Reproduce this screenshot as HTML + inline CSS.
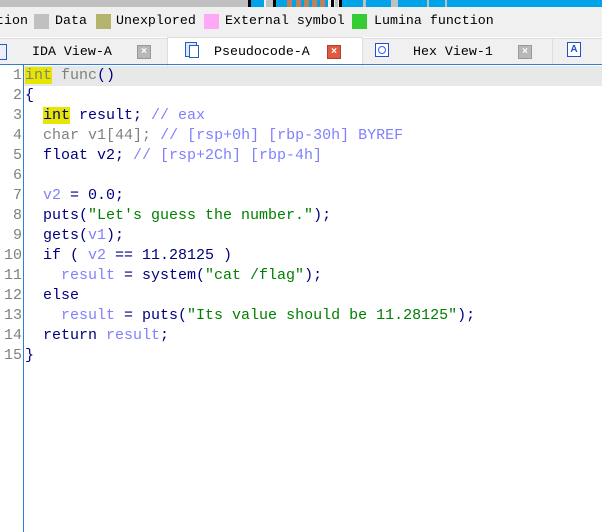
<!DOCTYPE html>
<html><head><meta charset="utf-8"><style>
body{margin:0;width:602px;height:532px;background:#fff;position:relative;overflow:hidden;font-family:"Liberation Mono",monospace}
.a{position:absolute}
.top{top:0;left:0;width:602px;height:37px;background:#f0f0f0}
.seg{position:absolute;top:0;height:7px}
.lg{font-size:13.3px;top:13px;color:#000}
.box{top:14px;width:15px;height:15px}
.tab{font-size:13.3px;top:44px;color:#000}
.cl{width:12px;height:12px;top:45px;background:#b8b8b8;border:1px solid #999;color:#fff;font:bold 10px/12px "Liberation Sans",sans-serif;text-align:center}
.code{top:66px;left:0;font-size:15px;line-height:20px;white-space:pre}
.ln{position:absolute;left:0;width:22px;text-align:right;color:#808080}
.tx{position:absolute;left:25px;color:#000080}
.g{color:#808080}.c{color:#8080ff}.v{color:#8080ff}.s{color:#008000}.y{background:#e6e600}
</style></head><body>
<div class="a top"></div>
<div class="seg" style="left:0;width:248px;background:#c0c0c0"></div>
<div class="seg" style="left:248px;width:3px;background:#000"></div>
<div class="seg" style="left:251px;width:13px;background:#00a2e8"></div>
<div class="seg" style="left:266px;width:7px;background:#c0c0c0"></div>
<div class="seg" style="left:273px;width:3px;background:#000"></div>
<div class="seg" style="left:276px;width:52px;background:#00a2e8"></div>
<div class="seg" style="left:287px;width:5px;background:#c0805a"></div>
<div class="seg" style="left:296px;width:5px;background:#c0805a"></div>
<div class="seg" style="left:304px;width:5px;background:#c0805a"></div>
<div class="seg" style="left:312px;width:5px;background:#c0805a"></div>
<div class="seg" style="left:320px;width:5px;background:#c0805a"></div>
<div class="seg" style="left:331px;width:3px;background:#000"></div>
<div class="seg" style="left:335px;width:3px;background:#c0c0c0"></div>
<div class="seg" style="left:339px;width:3px;background:#000"></div>
<div class="seg" style="left:342px;width:21px;background:#00a2e8"></div>
<div class="seg" style="left:363px;width:3px;background:#c0c0c0"></div>
<div class="seg" style="left:366px;width:25px;background:#00a2e8"></div>
<div class="seg" style="left:391px;width:7px;background:#c0c0c0"></div>
<div class="seg" style="left:398px;width:29px;background:#00a2e8"></div>
<div class="seg" style="left:427px;width:2px;background:#c0c0c0"></div>
<div class="seg" style="left:429px;width:16px;background:#00a2e8"></div>
<div class="seg" style="left:445px;width:2px;background:#c0c0c0"></div>
<div class="seg" style="left:447px;width:155px;background:#00a2e8"></div>

<div class="a lg" style="left:-4px">tion</div>
<div class="a box" style="left:34px;background:#c0c0c0"></div>
<div class="a lg" style="left:55px">Data</div>
<div class="a box" style="left:96px;background:#b4b46c"></div>
<div class="a lg" style="left:116px">Unexplored</div>
<div class="a box" style="left:204px;background:#ffa8f8"></div>
<div class="a lg" style="left:225px">External symbol</div>
<div class="a box" style="left:352px;background:#33cc33"></div>
<div class="a lg" style="left:374px">Lumina function</div>

<div class="a" style="left:0;top:38px;width:602px;height:26px;background:#f0f0f0;border-top:1px solid #ddd"></div>
<div class="a" style="left:167px;top:37px;width:194px;height:28px;background:#fff;border:1px solid #ddd;border-bottom:none"></div>
<div class="a" style="left:552px;top:39px;width:1px;height:25px;background:#ddd"></div>
<div class="a" style="left:0;top:44px;width:6px;height:14px;border:1px solid #2060c0;border-left:none;background:#eef"></div>
<div class="a tab" style="left:32px">IDA View-A</div>
<div class="a cl" style="left:137px">×</div>
<div class="a" style="left:185px;top:42px;width:10px;height:13px;border:1px solid #2060c0;background:#dde8ff"></div>
<div class="a" style="left:189px;top:45px;width:8px;height:11px;border:1px solid #2060c0;background:#fff"></div>
<div class="a tab" style="left:214px">Pseudocode-A</div>
<div class="a cl" style="left:327px;background:#e05a40;border-color:#b04030">×</div>
<div class="a" style="left:375px;top:43px;width:12px;height:12px;border:1px solid #2050d0;background:#fff"></div>
<div class="a" style="left:378px;top:46px;width:6px;height:6px;border:1px solid #3060ff;border-radius:50%"></div>
<div class="a tab" style="left:413px">Hex View-1</div>
<div class="a cl" style="left:518px">×</div>
<div class="a" style="left:567px;top:42px;width:12px;height:13px;border:1px solid #2050d0;background:#fff;font:bold 10px/13px 'Liberation Sans';text-align:center;color:#2050d0">A</div>

<div class="a" style="left:0;top:64px;width:602px;height:1px;background:#3080d0"></div>
<div class="a" style="left:24px;top:66px;width:578px;height:20px;background:#e8e8e8"></div>
<div class="a" style="left:23px;top:65px;width:1px;height:467px;background:#3080d0"></div>

<div class="a code" style="left:0;width:602px">
<div class="ln" style="top:0">1</div><div class="tx" style="top:0"><span class="y g">int</span><span class="g"> func</span>()</div>
<div class="ln" style="top:20px">2</div><div class="tx" style="top:20px">{</div>
<div class="ln" style="top:40px">3</div><div class="tx" style="top:40px">  <span class="y">int</span> result; <span class="c">// eax</span></div>
<div class="ln" style="top:60px">4</div><div class="tx" style="top:60px">  <span class="g">char v1[44];</span> <span class="c">// [rsp+0h] [rbp-30h] BYREF</span></div>
<div class="ln" style="top:80px">5</div><div class="tx" style="top:80px">  float v2; <span class="c">// [rsp+2Ch] [rbp-4h]</span></div>
<div class="ln" style="top:100px">6</div>
<div class="ln" style="top:120px">7</div><div class="tx" style="top:120px">  <span class="v">v2</span> = 0.0;</div>
<div class="ln" style="top:140px">8</div><div class="tx" style="top:140px">  puts(<span class="s">"Let's guess the number."</span>);</div>
<div class="ln" style="top:160px">9</div><div class="tx" style="top:160px">  gets(<span class="v">v1</span>);</div>
<div class="ln" style="top:180px">10</div><div class="tx" style="top:180px">  if ( <span class="v">v2</span> == 11.28125 )</div>
<div class="ln" style="top:200px">11</div><div class="tx" style="top:200px">    <span class="v">result</span> = system(<span class="s">"cat /flag"</span>);</div>
<div class="ln" style="top:220px">12</div><div class="tx" style="top:220px">  else</div>
<div class="ln" style="top:240px">13</div><div class="tx" style="top:240px">    <span class="v">result</span> = puts(<span class="s">"Its value should be 11.28125"</span>);</div>
<div class="ln" style="top:260px">14</div><div class="tx" style="top:260px">  return <span class="v">result</span>;</div>
<div class="ln" style="top:280px">15</div><div class="tx" style="top:280px">}</div>
</div>
</body></html>
